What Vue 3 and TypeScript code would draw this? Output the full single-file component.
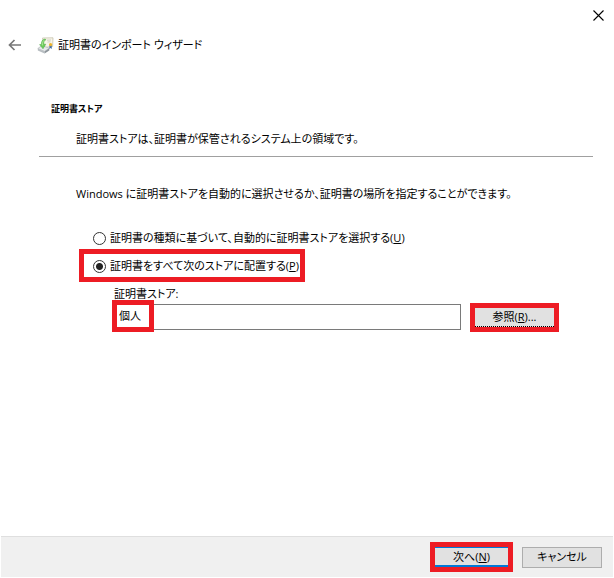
<script setup lang="ts">
import { ref } from 'vue'

type Placement = 'auto' | 'manual'

const placement = ref<Placement>('manual')
const storeName = ref('個人')
</script>

<template>
  <main class="wizard">
    <div class="titlebar">
      <button class="icon-button" type="button" aria-label="閉じる">
        <svg width="11" height="11" viewBox="0 0 11 11" aria-hidden="true">
          <path d="M0.5 0.5L10.5 10.5M10.5 0.5L0.5 10.5" stroke="#000" stroke-width="1.1" />
        </svg>
      </button>
    </div>

    <header class="header">
      <button class="icon-button" type="button" aria-label="戻る">
        <svg width="14" height="12" viewBox="0 0 14 12" aria-hidden="true">
          <path d="M13 6H2M6.5 1L1.5 6L6.5 11" fill="none" stroke="#777" stroke-width="1.7" />
        </svg>
      </button>
      <svg class="cert-icon" width="17" height="17" viewBox="0 0 17 17" aria-hidden="true">
        <path d="M5.5 1L16 .8L15.6 9.5L7 10.5Z" fill="#f8f5e8" stroke="#c5c1ac" stroke-width=".8" />
        <path d="M10 3.2L14 3M10.5 5L13.5 4.8" stroke="#bdbdb2" stroke-width=".7" />
        <path d="M12.6 8L12.3 12L13.6 11L14.8 12L14.7 8Z" fill="#426fa8" />
        <circle cx="13.6" cy="7.6" r="1.6" fill="#efb52f" />
        <path d="M.8 11.5L5 8.5L12.3 11.3L7.6 14.4Z" fill="#e7eaeb" stroke="#a8adb0" stroke-width=".6" />
        <path d="M.8 11.5L7.6 14.4V16.6L.8 13.6Z" fill="#b7bdc1" />
        <path d="M7.6 14.4L12.3 11.3V13.4L7.6 16.6Z" fill="#8c949a" />
        <path d="M8.2 2C5.6 2.2 4.2 4.2 4.4 7.4L2.6 7.6L6 11.8L8.8 7.2L6.8 7.3C6.6 5 7.1 3.5 8.9 2.8Z" fill="#6ccb5a" stroke="#4daa45" stroke-width=".5" />
        <path d="M7 3.3C5.8 4.2 5.4 5.6 5.6 8.4" fill="none" stroke="#b2eba0" stroke-width=".9" />
      </svg>
      <h1 class="title">証明書のインポート ウィザード</h1>
    </header>

    <section class="intro">
      <h2 class="heading">証明書ストア</h2>
      <p class="summary">証明書ストアは、証明書が保管されるシステム上の領域です。</p>
    </section>

    <form id="store-form" class="content" @submit.prevent>
      <p class="text">Windows に証明書ストアを自動的に選択させるか、証明書の場所を指定することができます。</p>
      <div class="options">
        <label class="option">
          <input v-model="placement" class="radio" type="radio" name="placement" value="auto" />
          <span>証明書の種類に基づいて、自動的に証明書ストアを選択する(<u>U</u>)</span>
        </label>
        <label class="option marked marked-option">
          <input v-model="placement" class="radio" type="radio" name="placement" value="manual" />
          <span>証明書をすべて次のストアに配置する(<u>P</u>)</span>
        </label>
      </div>
      <div class="store">
        <label class="text" for="store-name">証明書ストア:</label>
        <div class="store-row">
          <div class="field marked marked-field">
            <input id="store-name" v-model="storeName" class="store-input" type="text" readonly />
          </div>
          <button class="button browse marked marked-button" type="button">参照(<u>R</u>)...</button>
        </div>
      </div>
    </form>

    <footer class="footer">
      <button class="button next marked marked-button" type="submit" form="store-form">次へ(<u>N</u>)</button>
      <button class="button" type="button">キャンセル</button>
    </footer>
  </main>
</template>

<style>
body {
  margin: 0;
  background: #fff;
}
</style>

<style scoped>
.wizard {
  box-sizing: border-box;
  display: flex;
  flex-direction: column;
  min-height: 100vh;
  padding: 0 1px 1px;
  background: #fff;
  color: #000;
  font-family: "Open Sans", "Noto Sans CJK JP", sans-serif;
  font-size: 11px;
  line-height: 16px;
  font-feature-settings: "palt";
}

.wizard *,
.wizard *::after {
  box-sizing: border-box;
}

h1,
h2,
p {
  margin: 0;
  font-weight: 400;
}

button,
input {
  margin: 0;
  color: inherit;
  font: inherit;
  font-feature-settings: inherit;
}

.titlebar {
  display: flex;
  justify-content: flex-end;
  padding: 5px 5px 0 0;
}

.icon-button {
  display: flex;
  align-items: center;
  justify-content: center;
  width: 20px;
  height: 20px;
  padding: 0;
  border: 0;
  background: none;
}

.header {
  display: flex;
  align-items: center;
  height: 20px;
  margin-top: 10px;
  padding-left: 4px;
}

.cert-icon {
  margin-left: 12px;
}

.title {
  margin-left: 4px;
  font-size: 11px;
}

.intro {
  margin: 46px 20px 0 38px;
  padding: 0 0 9px 12px;
  border-bottom: 1px solid #a0a0a0;
}

.heading {
  font-size: 9px;
  font-weight: 700;
}

.summary {
  margin: 14px 0 0 25px;
}

.content {
  flex: 1;
  padding: 29px 59px 0 75px;
}

.options {
  display: flex;
  flex-direction: column;
  align-items: flex-start;
  gap: 12px;
  margin: 28px 0 0 17px;
}

.option {
  display: flex;
  align-items: center;
  gap: 4px;
}

.radio {
  appearance: none;
  flex: none;
  width: 13px;
  height: 13px;
  border: 1px solid #333;
  border-radius: 50%;
  background: #fff;
}

.radio:checked {
  background: radial-gradient(circle, #222 0 3px, #fff 4px);
}

.store {
  margin: 12px 0 0 38px;
}

.store-row {
  display: flex;
  align-items: center;
  gap: 14px;
  margin-top: 2px;
}

.store .text {
  display: block;
}

.field {
  flex: 1;
  min-width: 0;
}

.store-input {
  display: block;
  width: 100%;
  height: 26px;
  padding: 0 4px 4px;
  border: 1px solid #7a7a7a;
  border-radius: 0;
  background: #fff;
}

.button {
  width: 80px;
  height: 21px;
  padding: 0;
  border: 1px solid #adadad;
  background: #e1e1e1;
  line-height: 16px;
}

.browse {
  width: 79px;
  height: 19px;
  border: 0;
  border-bottom: 1px dotted #000;
}

.next {
  width: 73px;
  height: 20px;
  border: 0;
  border-top: 1px solid #0078d7;
  border-bottom: 2px solid #0078d7;
}

.marked {
  position: relative;
}

.marked::after {
  content: "";
  position: absolute;
  border: 5px solid #ed1c24;
  pointer-events: none;
}

.marked-option::after {
  inset: -9px -6px -8px -14px;
}

.marked-field::after {
  top: -4px;
  left: -2px;
  width: 42px;
  height: 32px;
}

.marked-button::after {
  inset: -5px -5px -6px;
}

.next.marked-button::after {
  inset: -6px -5px -7px;
}

.footer {
  display: flex;
  align-items: center;
  justify-content: flex-end;
  gap: 14px;
  height: 41px;
  padding-right: 11px;
  border-top: 1px solid #dfdfdf;
  background: #f0f0f0;
}
</style>
